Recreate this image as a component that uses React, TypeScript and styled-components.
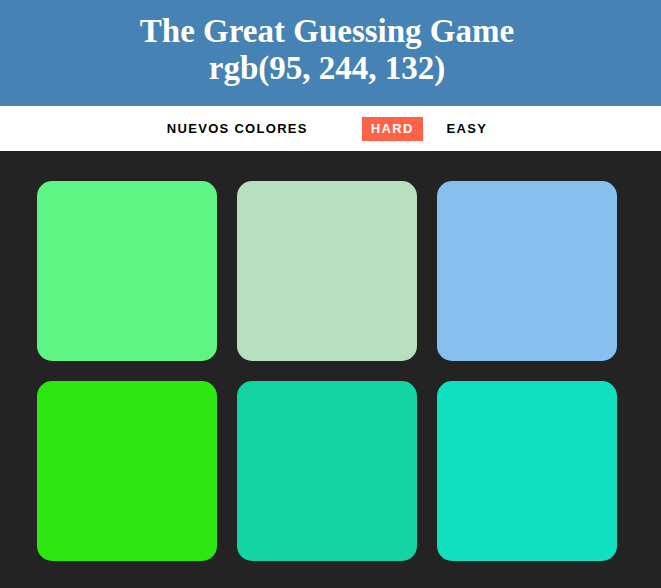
import React from "react";
import styled, { createGlobalStyle } from "styled-components";

const Global = createGlobalStyle`
  html, body { margin: 0; padding: 0; background: #232323; }
  body { font-family: "Liberation Sans", Arial, sans-serif; }
`;

const Header = styled.header`
  background: #4682b4;
  color: #fff;
  text-align: center;
  height: 106px;
  box-sizing: border-box;
  padding: 13px 7px 0 0;
  display: flex;
  flex-direction: column;
  align-items: center;
`;

const Title = styled.h1`
  margin: 0;
  font-family: "Liberation Serif", "Times New Roman", serif;
  font-weight: bold;
  font-size: 33px;
  line-height: 37px;
`;

const Nav = styled.nav`
  background: #fff;
  height: 45px;
  display: flex;
  justify-content: center;
  align-items: center;
  padding-right: 7px;
`;

const NavButton = styled.button<{ $active?: boolean; $gap?: number }>`
  border: none;
  background: ${(p) => (p.$active ? "#ff6347" : "transparent")};
  color: ${(p) => (p.$active ? "#fff" : "#000")};
  font-family: "Liberation Sans", Arial, sans-serif;
  font-weight: bold;
  font-size: 13px;
  letter-spacing: 1.3px;
  text-transform: uppercase;
  height: 24px;
  padding: 0 9px;
  margin-left: ${(p) => p.$gap ?? 0}px;
  cursor: pointer;
`;

const Board = styled.main`
  display: grid;
  grid-template-columns: repeat(3, 180px);
  gap: 20px;
  padding: 30px 0 0 37px;
`;

const Square = styled.div<{ $color: string }>`
  width: 180px;
  height: 180px;
  border-radius: 15px;
  background: ${(p) => p.$color};
`;

const colors = [
  "rgb(95, 244, 132)",
  "#b8dfc0",
  "#87c0f0",
  "#2ee612",
  "#14d4a4",
  "#0ee0c0",
];

export default function App() {
  return (
    <>
      <Global />
      <Header>
        <Title>The Great Guessing Game</Title>
        <Title>rgb(95, 244, 132)</Title>
      </Header>
      <Nav>
        <NavButton>Nuevos Colores</NavButton>
        <NavButton $active $gap={45}>Hard</NavButton>
        <NavButton $gap={15}>Easy</NavButton>
      </Nav>
      <Board>
        {colors.map((c, i) => (
          <Square key={i} $color={c} />
        ))}
      </Board>
    </>
  );
}
